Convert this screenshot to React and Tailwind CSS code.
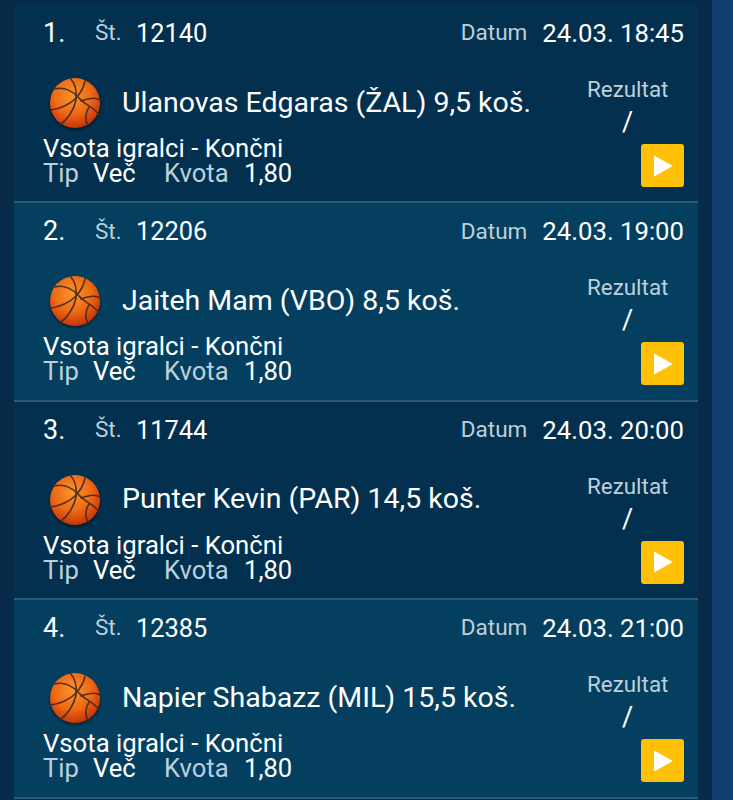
const rows = [
  { n: "1.", id: "12140", date: "24.03. 18:45", name: "Ulanovas Edgaras (ŽAL) 9,5 koš.", bg: "bg-[#03304e]" },
  { n: "2.", id: "12206", date: "24.03. 19:00", name: "Jaiteh Mam (VBO) 8,5 koš.", bg: "bg-[#053f5f]" },
  { n: "3.", id: "11744", date: "24.03. 20:00", name: "Punter Kevin (PAR) 14,5 koš.", bg: "bg-[#03304e]" },
  { n: "4.", id: "12385", date: "24.03. 21:00", name: "Napier Shabazz (MIL) 15,5 koš.", bg: "bg-[#053f5f]" },
];

function Ball({ i }) {
  const id = `ball${i}`;
  return (
    <svg width="58" height="58" viewBox="0 0 58 58" className="shrink-0">
      <defs>
        <radialGradient id={id} cx="45%" cy="35%" r="68%">
          <stop offset="0%" stopColor="#f9962c" />
          <stop offset="55%" stopColor="#ee6a14" />
          <stop offset="100%" stopColor="#c22f08" />
        </radialGradient>
        <radialGradient id={`${id}s`} cx="50%" cy="50%" r="50%">
          <stop offset="85%" stopColor="#000" stopOpacity="0.4" />
          <stop offset="100%" stopColor="#000" stopOpacity="0" />
        </radialGradient>
      </defs>
      <ellipse cx="29" cy="31" rx="27.5" ry="27" fill={`url(#${id}s)`} />
      <circle cx="29" cy="29" r="25" fill={`url(#${id})`} />
      <g fill="none" stroke="#4e2a1c" strokeWidth="1.6" strokeLinecap="round" opacity="0.95">
        <path d="M9 15 C18 12 28 18 33 24 C39 31 48 33 53 41" />
        <path d="M5 36 C14 35 24 30 29 25 C35 19 38 12 39 7" />
        <path d="M24 4 C29 9 31 17 30 26 C28 36 21 46 15 50" />
        <path d="M35 27 C43 24 50 23 54 26" />
        <path d="M43 33 C39 39 39 47 42 51" />
      </g>
    </svg>
  );
}

function Row({ r, i }) {
  return (
    <div className={`${r.bg} h-[198.4px] flex flex-col border-b-2 border-[#2b5873] pl-[29px] pr-[14px]`}>
      <div className="flex items-center h-[30px] mt-[13px] text-white">
        <span className="w-[52px] text-[27px]">{r.n}</span>
        <span className="w-[41px] text-[22.5px] text-[#bcd0dc]">Št.</span>
        <span className="text-[25.4px]">{r.id}</span>
        <span className="ml-auto text-[22.5px] text-[#bcd0dc]">Datum</span>
        <span className="ml-[15px] text-[25.7px]">{r.date}</span>
      </div>
      <div className="flex flex-1">
        <div className="flex-1 min-w-0">
          <div className="flex items-center mt-[26px] h-[58px] pl-[3px] text-white">
            <Ball i={i} />
            <span className="ml-[18px] text-[28.5px] whitespace-nowrap">{r.name}</span>
          </div>
          <div className="text-[25.7px] leading-[26px] text-white mt-[3px] whitespace-nowrap">Vsota igralci - Končni</div>
          <div className="flex items-center text-[25.6px] leading-[25px] whitespace-nowrap">
            <span className="w-[50px] text-[#bcd0dc]">Tip</span>
            <span className="w-[71px] text-white">Več</span>
            <span className="w-[80px] text-[#bcd0dc]">Kvota</span>
            <span className="text-white">1,80</span>
          </div>
        </div>
        <div className="w-[97px] flex flex-col items-end">
          <div className="w-[97px] pr-[16px] text-center text-[22.4px] leading-[26px] text-[#bcd0dc] mt-[28px]">Rezultat</div>
          <div className="w-[97px] pr-[16px] text-center text-[27px] leading-[30px] text-white mt-[5px]">/</div>
          <div className="w-[43px] h-[43px] mt-[7px] rounded-[3px] bg-[#ffc107] flex items-center justify-center">
            <svg width="20" height="22" viewBox="0 0 20 22">
              <path d="M2 2 L18 11 L2 20 Z" fill="#fff" stroke="#fff" strokeWidth="2" strokeLinejoin="round" />
            </svg>
          </div>
        </div>
      </div>
    </div>
  );
}

export default function App() {
  return (
    <div className="h-[800px] w-[733px] overflow-hidden bg-[#0f3d6e] pr-[21px] font-['Roboto',sans-serif]">
      <div className="h-full bg-[#062a47] px-[14px] pt-[4px]">
        <div className="h-[796px] pt-[1px] bg-[#03304e]">
          {rows.map((r, i) => <Row key={r.id} r={r} i={i} />)}
        </div>
      </div>
    </div>
  );
}
